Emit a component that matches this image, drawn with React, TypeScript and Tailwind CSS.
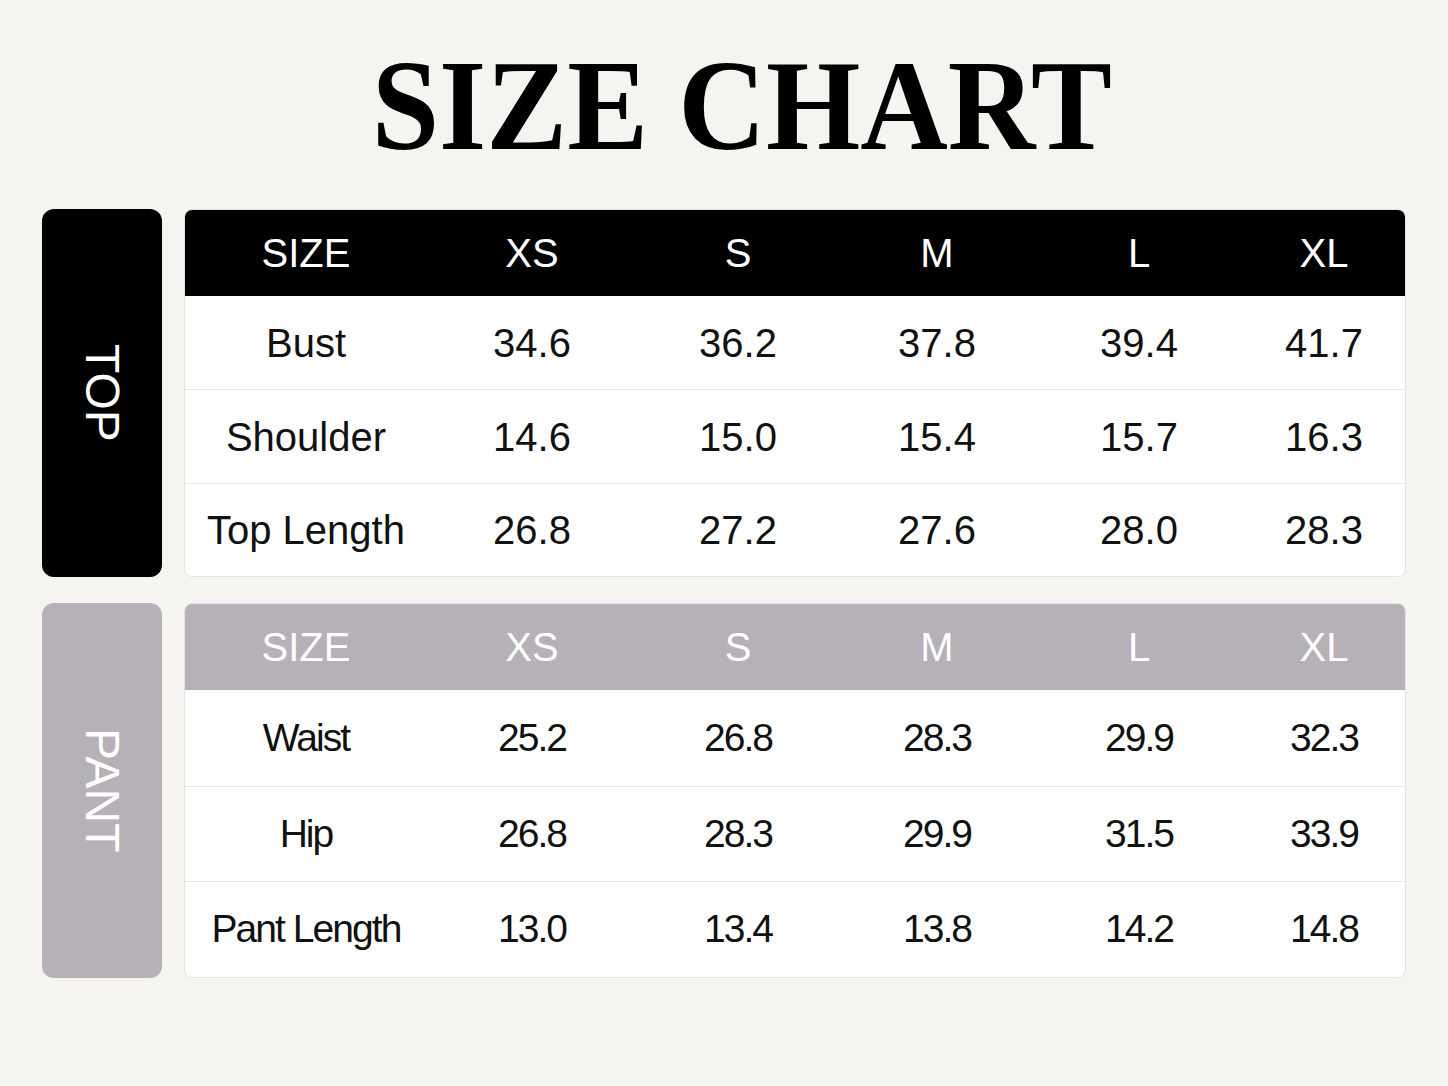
type Section = {
  label: string;
  tone: 'dark' | 'mauve';
  rows: { name: string; values: string[] }[];
};

const SIZES = ['XS', 'S', 'M', 'L', 'XL'];

const SECTIONS: Section[] = [
  {
    label: 'TOP',
    tone: 'dark',
    rows: [
      { name: 'Bust', values: ['34.6', '36.2', '37.8', '39.4', '41.7'] },
      { name: 'Shoulder', values: ['14.6', '15.0', '15.4', '15.7', '16.3'] },
      { name: 'Top Length', values: ['26.8', '27.2', '27.6', '28.0', '28.3'] },
    ],
  },
  {
    label: 'PANT',
    tone: 'mauve',
    rows: [
      { name: 'Waist', values: ['25.2', '26.8', '28.3', '29.9', '32.3'] },
      { name: 'Hip', values: ['26.8', '28.3', '29.9', '31.5', '33.9'] },
      { name: 'Pant Length', values: ['13.0', '13.4', '13.8', '14.2', '14.8'] },
    ],
  },
];

const COLS = 'grid grid-cols-[242px_210px_202px_196px_208px_1fr]';

function SizeTable({ section }: { section: Section }) {
  const dark = section.tone === 'dark';
  const fill = dark ? 'bg-black' : 'bg-[#b6b0b7]';
  const rowH = dark ? 'h-[93.4px]' : 'h-[95.6px]';
  const body = dark
    ? 'text-[40px] tracking-normal'
    : 'text-[39px] tracking-[-0.05em]';
  return (
    <div className="flex gap-[22px]">
      <div
        className={`flex w-[120px] shrink-0 items-center justify-center rounded-[12px] ${fill}`}
      >
        <span className="text-[48px] leading-none text-white [writing-mode:vertical-rl]">
          {section.label}
        </span>
      </div>
      <div className="flex-1 overflow-hidden rounded-[8px] border border-[#e5e3e0] bg-white">
        <div className={`${COLS} h-[86px] items-center text-center text-[40px] text-white ${fill}`}>
          <div>SIZE</div>
          {SIZES.map((s) => (
            <div key={s}>{s}</div>
          ))}
        </div>
        {section.rows.map((r, i) => (
          <div
            key={r.name}
            className={`${COLS} ${rowH} items-center text-center text-[#111] ${body} ${
              i > 0 ? 'border-t border-[#e8e6e3]' : ''
            }`}
          >
            <div>{r.name}</div>
            {r.values.map((v, j) => (
              <div key={j}>{v}</div>
            ))}
          </div>
        ))}
      </div>
    </div>
  );
}

export default function App() {
  return (
    <div className="min-h-[1086px] w-[1448px] bg-[#f5f4f0] font-['Liberation_Sans',Arial,sans-serif]">
      <div className="flex justify-center pl-[36px] pt-[41px]">
        <h1 className="origin-center scale-x-[0.94] font-['Liberation_Serif','Times_New_Roman',serif] text-[129px] font-bold leading-none text-black">
          SIZE CHART
        </h1>
      </div>
      <div className="flex flex-col gap-[26px] px-[42px] pt-[39px]">
        {SECTIONS.map((s) => (
          <SizeTable key={s.label} section={s} />
        ))}
      </div>
    </div>
  );
}
